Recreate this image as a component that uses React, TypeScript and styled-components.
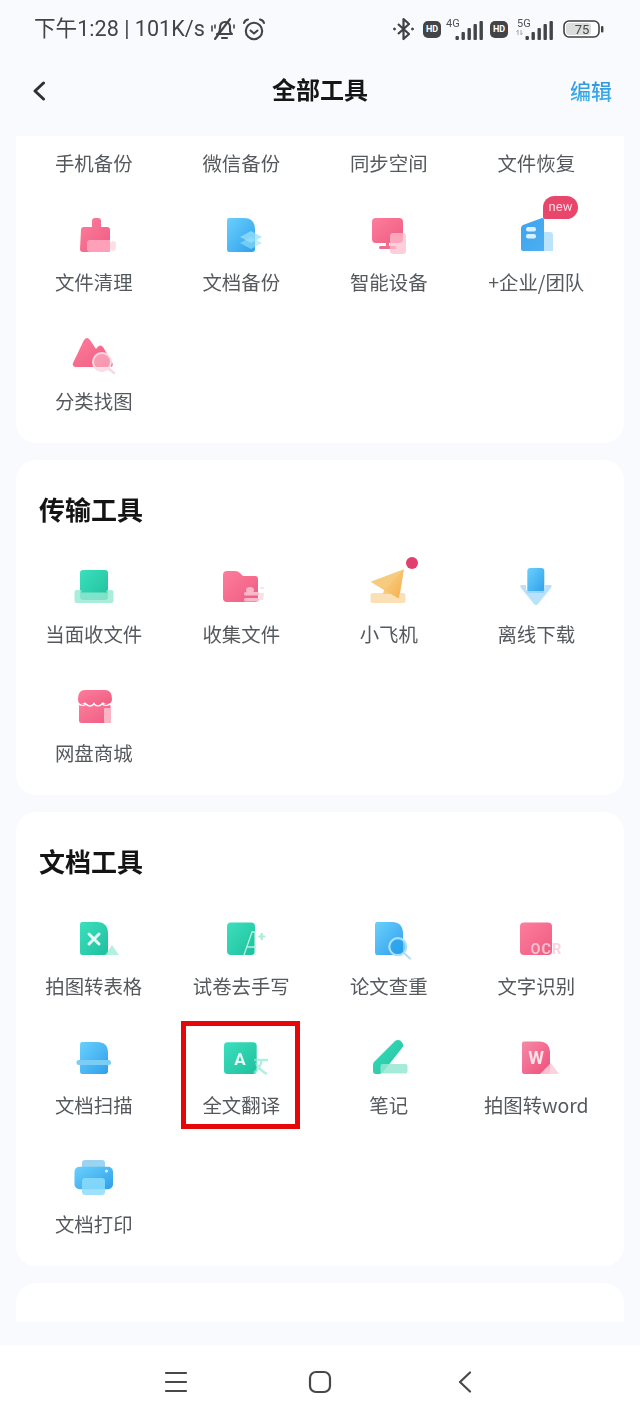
import React, { ReactNode } from "react";
import styled, { createGlobalStyle } from "styled-components";

const Global = createGlobalStyle`
  html, body { margin: 0; padding: 0; background: #f8fafe; }
  body { font-family: "Noto Sans CJK SC", "Noto Sans", sans-serif; }
`;

const Page = styled.div`
  width: 640px;
  height: 1422px;
  display: flex;
  flex-direction: column;
  overflow: hidden;
  background: #f8fafe;
`;

const StatusBar = styled.div`
  height: 58px;
  flex: none;
  display: flex;
  align-items: center;
  justify-content: space-between;
  padding: 0 36px 0 34px;
  color: #424446;
  filter: blur(0.35px);
`;
const StatusGroup = styled.div<{ $gap: number }>`
  display: flex;
  align-items: center;
  gap: ${(p) => p.$gap}px;
`;
const StatusText = styled.span`
  font-family: "Roboto", "Noto Sans CJK SC", sans-serif;
  font-size: 21.6px;
  line-height: 28px;
  white-space: nowrap;
`;
const HdBadge = styled.span`
  width: 18px;
  height: 17px;
  border-radius: 5px;
  background: #424446;
  color: #fff;
  font: 700 9px/17px "Roboto", sans-serif;
  text-align: center;
`;

const NavBar = styled.div`
  height: 78px;
  flex: none;
  display: grid;
  grid-template-columns: 1fr auto 1fr;
  align-items: center;
  padding: 0 28px 12px 28px;
  box-sizing: border-box;
`;
const BackIcon = styled.svg`
  display: block;
  margin-left: 5px;
`;
const NavTitle = styled.div`
  font-size: 24px;
  font-weight: 700;
  line-height: 32px;
  color: #161616;
  margin-bottom: 4px;
  filter: blur(0.25px);
`;
const NavAction = styled.div`
  justify-self: end;
  font-size: 21px;
  font-weight: 500;
  line-height: 30px;
  margin-bottom: 2px;
  background: linear-gradient(180deg, #2a8fd6, #3fb4ee);
  -webkit-background-clip: text;
  background-clip: text;
  color: transparent;
  filter: blur(0.25px);
`;

const Main = styled.div`
  flex: 1;
  min-height: 0;
  overflow: hidden;
  margin-bottom: 23px;
`;
const CardStack = styled.div`
  display: flex;
  flex-direction: column;
  gap: 17px;
  margin-top: -42px;
  padding: 0 16px;
`;
const Card = styled.section<{ $titled?: boolean }>`
  background: #fff;
  border-radius: 20px;
  padding: ${(p) => (p.$titled ? "31px" : "0")} 14px 29px 4px;
`;
const EmptyCard = styled.section`
  background: #fff;
  border-radius: 20px;
  height: 120px;
`;
const SectionTitle = styled.h2`
  margin: 0 0 38px 19px;
  font-size: 26px;
  font-weight: 700;
  line-height: 36px;
  color: #141414;
  filter: blur(0.25px);
`;
const ToolGrid = styled.div`
  display: grid;
  grid-template-columns: repeat(4, 147.5px);
  row-gap: 37px;
`;
const Tool = styled.div`
  position: relative;
  display: flex;
  flex-direction: column;
  align-items: center;
  gap: 7px;
  padding-bottom: 1px;
`;
const ToolIcon = styled.svg`
  display: block;
  width: 60px;
  height: 50px;
  overflow: visible;
  filter: blur(0.6px);
`;
const ToolLabel = styled.div`
  font-size: 19.4px;
  line-height: 24px;
  color: #55595d;
  white-space: nowrap;
  filter: blur(0.3px);
`;
const NewBadge = styled.span`
  position: absolute;
  left: 80.5px;
  top: -17.5px;
  width: 35px;
  height: 23px;
  border-radius: 12px 12px 12px 2px;
  background: #e9466b;
  color: #ffd9e2;
  font: 400 13px/22px "Roboto", sans-serif;
  text-align: center;
  filter: blur(0.3px);
`;
const RedDot = styled.span`
  position: absolute;
  left: 91px;
  top: -8px;
  width: 12px;
  height: 12px;
  border-radius: 50%;
  background: #e2406c;
`;
const Highlight = styled.div`
  position: absolute;
  left: 13.5px;
  top: -15px;
  width: 119px;
  height: 108px;
  box-sizing: border-box;
  border: 5.5px solid #e60808;
`;

const BottomBar = styled.div`
  height: 77px;
  flex: none;
  background: #fff;
  display: flex;
  justify-content: center;
  padding-top: 25px;
  box-sizing: border-box;
`;
const BottomSlot = styled.div`
  width: 144.5px;
  height: 24px;
  display: flex;
  justify-content: center;
  align-items: center;
`;
const DefsHolder = styled.svg`
  display: block;
  width: 0;
  height: 0;
`;

const P = "url(#gPink)";
const B = "url(#gBlue)";
const G = "url(#gGreen)";
const LP = "rgba(253,190,205,.75)";

const glyphs: Record<string, ReactNode> = {
  clean: (
    <>
      <path fill={P} d="M29 5h5q3 0 3 3v6h6q3 0 3 3v19q0 3 -3 3h-24q-3 0 -3 -3l1 -19q0 -3 3 -3h8v-6q0 -3 3 -3z" />
      <path fill="#fda0b8" d="M23 30q0 -3 3 -3h20v12h-20q-3 0 -3 -3z" />
      <rect x="46" y="28" width="6" height="10" rx="3" fill="#fde0e6" />
    </>
  ),
  backup: (
    <>
      <path fill={B} d="M18 5h15q11 0 11 12v19q0 3 -3 3h-23q-2 0 -2 -3v-28q0 -3 2 -3z" />
      <path fill="rgba(150,225,250,.75)" d="M40 18l11 6l-11 6l-11 -6z" />
      <path fill="rgba(150,225,250,.6)" d="M40 24l11 6l-11 6l-11 -6z" />
    </>
  ),
  device: (
    <>
      <rect x="13" y="5" width="31" height="25" rx="4" fill={P} />
      <rect x="20" y="33" width="17" height="3" rx="1.5" fill="#ef6c8d" />
      <rect x="27" y="29" width="3" height="5" fill="#ef6c8d" />
      <rect x="31" y="20" width="16" height="21" rx="3" fill={LP} />
    </>
  ),
  team: (
    <>
      <path fill="url(#gBlue2)" d="M15 15q0 -2 2 -3l19 -7q2 -0.5 2 2v31h-21q-2 0 -2 -2z" />
      <rect x="20" y="14" width="10" height="4.5" rx="2" fill="#d8f0ff" />
      <rect x="20" y="21" width="10" height="4.5" rx="2" fill="#d8f0ff" />
      <path fill="rgba(170,220,250,.8)" d="M38 19h6q3 0 3 3v16h-9z" />
    </>
  ),
  photo: (
    <>
      <path fill={P} d="M20 8q3 -4 6 0l6 9q4 -6 7 -2l9 15q2 5 -2 5h-35q-3 -1 -2 -4z" />
      <circle cx="38" cy="30" r="9" fill="rgba(253,200,214,.55)" stroke="#fbdbe3" strokeWidth="2" />
      <path d="M45 37l5 4" stroke="#f6d8e0" strokeWidth="2.5" strokeLinecap="round" />
    </>
  ),
  face: (
    <>
      <rect x="16" y="5" width="28" height="30" rx="3" fill={G} />
      <path fill="rgba(150,232,210,.8)" d="M10.5 27q0 -2 2 -2h5v3h25v-3h5q2 0 2 2v9q0 2 -2 2h-35q-2 0 -2 -2z" />
      <path d="M18 28h24" stroke="#7fe5c9" strokeWidth="1" />
    </>
  ),
  folder: (
    <>
      <path fill={P} d="M16 6h8q3 0 5 2l3 3h12q3 0 3 3v20q0 3 -3 3h-28q-4 0 -4 -4v-23q0 -4 4 -4z" />
      <ellipse cx="39" cy="25" rx="4" ry="3" fill="#fbb8c8" />
      <rect x="33" y="27" width="15" height="3.5" rx="1.5" fill="#fbb8c8" />
      <rect x="33" y="33" width="15" height="3.5" rx="1.5" fill="#fbb8c8" />
      <rect x="49" y="22" width="4" height="2" rx="1" fill="#fde0e6" />
      <path d="M48 28h5l-1 7h-4z" fill="#fde0e6" />
    </>
  ),
  plane: (
    <>
      <rect x="11.5" y="28" width="35" height="10" rx="2.5" fill="#fbe0b6" />
      <path fill="#f6cb7e" d="M44.8 4.3l-33.3 12.4l13.5 8.3l-1 4l17 0z" />
      <path fill="url(#gOrange)" d="M44.8 4.3l-20 20.7l15 8.5z" />
    </>
  ),
  download: (
    <>
      <path fill={B} d="M21.3 6q0 -3 3 -3h11q3 0 3 3v22h-17z" />
      <path fill="rgba(172,220,250,.85)" d="M16 20h4v3q0 3 3 3h13q3 0 3 -3v-3h5q3 0 1 3l-13 16q-2 2 -4 0l-13 -16q-2 -3 1 -3z" />
    </>
  ),
  shop: (
    <>
      <rect x="15" y="20" width="31.5" height="19" rx="2.5" fill={P} />
      <rect x="40" y="24" width="7" height="15" rx="1" fill="#fbb4c5" />
      <path fill="url(#gPink)" d="M21 6h20q7 0 7 9q0 5 -5 5q-3 0 -4 -2q-2 3 -5 3q-3 0 -4 -3q-1 3 -4 3q-4 0 -5 -3q-1 2 -4 2q-3 0 -3 -5q0 -9 7 -9z" />
      <path d="M15 20q4 3 7 0q4 4 8 0q4 4 8 0q4 3 8 0" fill="none" stroke="#fff" strokeWidth="1.2" />
    </>
  ),
  excel: (
    <>
      <path fill={G} d="M18 5h15q11 0 11 12v18q0 3 -3 3h-23q-2 0 -2 -3v-27q0 -3 2 -3z" />
      <path d="M25 17l10 10M35 17l-10 10" stroke="#e7fbf5" strokeWidth="3" strokeLinecap="round" />
      <path fill="rgba(150,232,210,.7)" d="M48 28l7 10h-14z" />
    </>
  ),
  erase: (
    <>
      <rect x="16" y="5.5" width="28" height="32.5" rx="4" fill={G} />
      <path d="M33 38l8 -23h3v23M36 30h9" fill="none" stroke="#b4f3e1" strokeWidth="1.3" />
      <path d="M50.7 16v7M47.2 19.5h7" stroke="#a6efda" strokeWidth="2.2" />
    </>
  ),
  check: (
    <>
      <path fill={B} d="M18 5h15q11 0 11 12v18q0 3 -3 3h-23q-2 0 -2 -3v-27q0 -3 2 -3z" />
      <circle cx="38.8" cy="29.7" r="8.5" fill="rgba(37,160,235,.6)" stroke="#a9e0fa" strokeWidth="2.2" />
      <path d="M46 37l5 4.5" stroke="#b6dcef" strokeWidth="2.2" strokeLinecap="round" />
    </>
  ),
  ocr: (
    <>
      <rect x="14" y="5.5" width="32" height="32.5" rx="4" fill={P} />
      <text x="24.5" y="37" fontFamily="Roboto, sans-serif" fontWeight="700" fontSize="14.5" letterSpacing="1" fill="rgba(246,205,218,.85)">OCR</text>
    </>
  ),
  scan: (
    <>
      <path fill={B} d="M18 6h15q11 0 11 11v18q0 3 -3 3h-23q-2 0 -2 -3v-26q0 -3 2 -3z" />
      <rect x="12.5" y="24" width="34.5" height="5" rx="2.5" fill="#7ccdf6" />
    </>
  ),
  translate: (
    <>
      <rect x="13" y="6.3" width="32.7" height="31.7" rx="3.5" fill={G} />
      <text x="29" y="29" textAnchor="middle" fontFamily="Roboto, sans-serif" fontWeight="700" fontSize="17" fill="#e9fbf6">A</text>
      <path d="M43 24h14M51 24q-2 8 -8 13M45 27q3 7 11 11" fill="none" stroke="rgba(150,232,210,.75)" strokeWidth="2.4" />
    </>
  ),
  note: (
    <>
      <path fill={G} d="M36 5q3 -2 6 0l2 3q1 2 -1 4l-19 24q-2 2 -4 2h-3q-3 0 -3 -3v-6q0 -2 1 -3z" />
      <rect x="21.5" y="28" width="27" height="9.5" rx="2" fill="rgba(150,232,210,.85)" />
    </>
  ),
  word: (
    <>
      <path fill="url(#gPink2)" d="M18 5.5h15q11 0 11 12v17.5q0 3 -3 3h-23q-2 0 -2 -3v-27.5q0 -2 2 -2z" />
      <text x="30" y="28" textAnchor="middle" fontFamily="Roboto, sans-serif" fontWeight="700" fontSize="18" fill="#fbe1e8">W</text>
      <path fill="rgba(252,205,216,.9)" d="M45 27l8 11h-19z" />
    </>
  ),
  print: (
    <>
      <rect x="18" y="5" width="23" height="14" rx="3" fill="#9bd3f0" />
      <rect x="10.5" y="11.7" width="38.5" height="22.6" rx="5" fill={B} />
      <rect x="18" y="23" width="23" height="17" rx="3" fill="rgba(140,220,252,.85)" />
      <circle cx="42.5" cy="16" r="1.5" fill="#d7f2ff" />
    </>
  ),
};

type ToolData = { label: string; icon?: string; badge?: "new" | "dot"; marked?: boolean };

const groups: { title?: string; tools: ToolData[] }[] = [
  {
    tools: [
      { label: "手机备份" },
      { label: "微信备份" },
      { label: "同步空间" },
      { label: "文件恢复" },
      { label: "文件清理", icon: "clean" },
      { label: "文档备份", icon: "backup" },
      { label: "智能设备", icon: "device" },
      { label: "+企业/团队", icon: "team", badge: "new" },
      { label: "分类找图", icon: "photo" },
    ],
  },
  {
    title: "传输工具",
    tools: [
      { label: "当面收文件", icon: "face" },
      { label: "收集文件", icon: "folder" },
      { label: "小飞机", icon: "plane", badge: "dot" },
      { label: "离线下载", icon: "download" },
      { label: "网盘商城", icon: "shop" },
    ],
  },
  {
    title: "文档工具",
    tools: [
      { label: "拍图转表格", icon: "excel" },
      { label: "试卷去手写", icon: "erase" },
      { label: "论文查重", icon: "check" },
      { label: "文字识别", icon: "ocr" },
      { label: "文档扫描", icon: "scan" },
      { label: "全文翻译", icon: "translate", marked: true },
      { label: "笔记", icon: "note" },
      { label: "拍图转word", icon: "word" },
      { label: "文档打印", icon: "print" },
    ],
  },
];

const grad = (id: string, a: string, b: string) => (
  <linearGradient id={id} x1="0" y1="0" x2="1" y2="1">
    <stop offset="0" stopColor={a} />
    <stop offset="1" stopColor={b} />
  </linearGradient>
);

const Bars = ({ tag, arrows }: { tag: string; arrows?: boolean }) => (
  <svg width="38" height="22" viewBox="0 0 38 22" style={{ display: "block" }}>
    <text x={arrows ? 1 : 0} y="9" fontFamily="Roboto, sans-serif" fontSize="11" fill="#505254">{tag}</text>
    {arrows && <path d="M2 17v-5M2 12l-1.5 2M5 12v5M5 17l1.5 -2" stroke="#a6a8aa" strokeWidth="1" fill="none" />}
    <rect x="9.5" y="18" width="3.4" height="4" rx="1" fill="#424446" />
    <rect x="15.5" y="14" width="3.4" height="8" rx="1" fill="#424446" />
    <rect x="21.5" y="10" width="3.4" height="12" rx="1" fill="#424446" />
    <rect x="27.5" y="6" width="3.4" height="16" rx="1" fill="#424446" />
    <rect x="33.5" y="3" width="3.4" height="19" rx="1" fill="#424446" />
  </svg>
);

export default function App() {
  return (
    <Page>
      <Global />
      <DefsHolder aria-hidden="true">
        <defs>
          {grad("gPink", "#fd7d9c", "#ee5c82")}
          {grad("gPink2", "#f58aa8", "#ef4e79")}
          {grad("gBlue", "#6ad0fb", "#2f9fec")}
          {grad("gBlue2", "#3ea2ee", "#4db0f2")}
          {grad("gGreen", "#3ce0bd", "#1fbf9e")}
          {grad("gOrange", "#fad58c", "#f4ae4c")}
        </defs>
      </DefsHolder>

      <StatusBar>
        <StatusGroup $gap={5}>
          <StatusText>下午1:28 | 101K/s</StatusText>
          <svg width="27" height="24" viewBox="0 0 27 24" fill="none" stroke="#424446" strokeWidth="2.1" strokeLinecap="round">
            <path d="M8 17q2 -2 2 -6q0 -6 5 -6q4 0 5 4v4q0 3 2 4zM7 17h15M12 21h5" />
            <path d="M5 22L20 2" />
            <path d="M2 9v5M5 8v3M24 8v3" strokeWidth="1.6" />
          </svg>
          <svg width="24" height="23" viewBox="0 0 24 23" fill="none" stroke="#424446" strokeWidth="2.1" strokeLinecap="round" strokeLinejoin="round">
            <circle cx="12" cy="13" r="8.2" />
            <path d="M8.5 12.5l3.5 3l3.5 -3" />
            <path d="M2 5q1 -3 4 -3.5M22 5q-1 -3 -4 -3.5" />
          </svg>
        </StatusGroup>
        <StatusGroup $gap={1}>
          <svg width="23" height="24" viewBox="0 0 23 24" fill="#3f4143" stroke="#3f4143" strokeWidth="2.2" strokeLinejoin="round" style={{ marginRight: 7 }}>
            <path fill="none" d="M6 7l11 10l-5.5 5v-20l5.5 5l-11 10" />
            <circle cx="2.5" cy="12" r="1" strokeWidth="1" />
            <circle cx="20.5" cy="12" r="1" strokeWidth="1" />
          </svg>
          <HdBadge>HD</HdBadge>
          <span style={{ width: 3 }} />
          <Bars tag="4G" />
          <span style={{ width: 4 }} />
          <HdBadge>HD</HdBadge>
          <span style={{ width: 6 }} />
          <Bars tag="5G" arrows />
          <span style={{ width: 7 }} />
          <svg width="41" height="18" viewBox="0 0 41 18">
            <rect x="1" y="1" width="35" height="16" rx="5" fill="#fff" stroke="#3f4143" strokeWidth="1.6" />
            <rect x="3" y="3" width="25" height="12" rx="3" fill="#dcdcdc" />
            <text x="19" y="14" textAnchor="middle" fontFamily="Roboto, sans-serif" fontSize="13" fill="#44464a">75</text>
            <rect x="38" y="6" width="2.4" height="6.5" rx="1" fill="#3f4143" />
          </svg>
        </StatusGroup>
      </StatusBar>

      <NavBar>
        <BackIcon width="12" height="20" viewBox="0 0 12 20" fill="none" stroke="#2e3033" strokeWidth="3" strokeLinecap="round" strokeLinejoin="round">
          <path d="M10.5 2L2 10l8.5 8" />
        </BackIcon>
        <NavTitle>全部工具</NavTitle>
        <NavAction>编辑</NavAction>
      </NavBar>

      <Main>
        <CardStack>
          {groups.map((group, i) => (
            <Card key={i} $titled={!!group.title}>
              {group.title && <SectionTitle>{group.title}</SectionTitle>}
              <ToolGrid>
                {group.tools.map((tool) => (
                  <Tool key={tool.label}>
                    <ToolIcon viewBox="0 0 60 50">{tool.icon ? glyphs[tool.icon] : null}</ToolIcon>
                    <ToolLabel>{tool.label}</ToolLabel>
                    {tool.badge === "new" && <NewBadge>new</NewBadge>}
                    {tool.badge === "dot" && <RedDot />}
                    {tool.marked && <Highlight />}
                  </Tool>
                ))}
              </ToolGrid>
            </Card>
          ))}
          <EmptyCard />
        </CardStack>
      </Main>

      <BottomBar>
        <BottomSlot>
          <svg width="24" height="22" viewBox="0 0 24 22" stroke="#46484a" strokeWidth="2.2" strokeLinecap="round">
            <path d="M2 2h20M2 11h20M2 20h20" />
          </svg>
        </BottomSlot>
        <BottomSlot>
          <svg width="24" height="24" viewBox="0 0 24 24" fill="none" stroke="#46484a" strokeWidth="2.2">
            <rect x="2" y="2" width="20" height="20" rx="6" />
          </svg>
        </BottomSlot>
        <BottomSlot>
          <svg width="14" height="22" viewBox="0 0 14 22" fill="none" stroke="#46484a" strokeWidth="2.2" strokeLinecap="round" strokeLinejoin="round">
            <path d="M12 1.5L2 11l10 9.5" />
          </svg>
        </BottomSlot>
      </BottomBar>
    </Page>
  );
}
